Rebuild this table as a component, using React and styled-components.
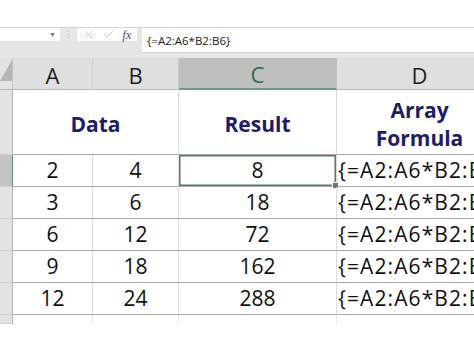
import React from "react";
import styled, { createGlobalStyle, css } from "styled-components";
import { X, Check } from "lucide-react";

const Global = createGlobalStyle`
  html, body { margin: 0; padding: 0; background: #ffffff; }
  body { font-family: "Open Sans", "Noto Sans", sans-serif; }
`;

const Page = styled.div`
  width: 474px;
  height: 355px;
  overflow: hidden;
  background: #ffffff;
`;

const TopSpace = styled.div`
  height: 27px;
  background: #ffffff;
`;

const FormulaBar = styled.div`
  display: flex;
  align-items: flex-start;
  height: 31px;
  box-sizing: border-box;
  background: #e6e6e6;
  border-top: 1px solid #d2d2d2;
`;

const NameBox = styled.div`
  width: 60px;
  height: 13px;
  background: #ffffff;
  display: flex;
  align-items: center;
  justify-content: flex-end;
  padding-right: 4px;
  box-sizing: border-box;
  color: #777;
  font-size: 7px;
`;

const Dots = styled.div`
  width: 17px;
  height: 13px;
  display: flex;
  align-items: center;
  justify-content: center;
  color: #b0b0b0;
  font-size: 9px;
  line-height: 1;
`;

const IconBox = styled.div`
  width: 60px;
  height: 13px;
  background: #ffffff;
  display: flex;
  align-items: center;
  justify-content: space-around;
  padding: 0 2px;
  box-sizing: border-box;
  color: #ababab;
`;

const Fx = styled.span`
  font-family: "Liberation Serif", serif;
  font-style: italic;
  font-size: 13px;
  color: #555;
  line-height: 1;
`;

const FormulaInput = styled.div`
  flex: 1;
  margin-left: 5px;
  height: 25px;
  background: #ffffff;
  border-bottom: 1px solid #d4d4d4;
  box-sizing: border-box;
  padding: 6px 0 0 5px;
  font-size: 11.5px;
  line-height: 14px;
  color: #1a1a1a;
  white-space: nowrap;
`;

const Sheet = styled.div`
  display: grid;
  grid-template-columns: 13px 80px 86px 158px 166px;
  grid-template-rows: 32px 65px repeat(5, 32px) 9px;
  width: 503px;
  background: #ffffff;
  position: relative;
`;

const Corner = styled.div`
  background: #e3e3e3;
  border-right: 1px solid #c4c4c4;
  border-bottom: 1px solid #b8b8b8;
  box-sizing: border-box;
  display: flex;
  align-items: flex-start;
  justify-content: flex-end;
  padding-top: 2px;
`;

const ColHead = styled.div`
  background: ${(p) => (p.$active ? "#bfbfbf" : "#dfdfdf")};
  color: ${(p) => (p.$active ? "#217346" : "#1e1e1e")};
  border-right: 1px solid ${(p) => (p.$active ? "#bfbfbf" : "#cfcfcf")};
  border-bottom: ${(p) => (p.$active ? "2px solid #6e9c80" : "1px solid #b8b8b8")};
  box-sizing: border-box;
  display: flex;
  align-items: center;
  justify-content: center;
  font-size: 22px;
  line-height: 1;
  padding-top: 2px;
`;

const RowHead = styled.div`
  background: ${(p) => (p.$active ? "#c4c4c4" : "#e3e3e3")};
  border-right: 1px solid ${(p) => (p.$active ? "#5f8f72" : "#b4b4b4")};
  border-bottom: 1px solid #d0d0d0;
  box-sizing: border-box;
`;

const Cell = styled.div`
  border-right: 1px solid #dcdcdc;
  border-bottom: 1px solid #a9a9a9;
  box-sizing: border-box;
  display: flex;
  align-items: center;
  justify-content: ${(p) => (p.$left ? "flex-start" : "center")};
  padding-left: ${(p) => (p.$left ? "1px" : "0")};
  letter-spacing: ${(p) => (p.$left ? "1.1px" : "0")};
  font-size: 21px;
  line-height: 1;
  color: #111;
  white-space: nowrap;
  position: relative;
  ${(p) =>
    p.$selected &&
    css`
      box-shadow: inset 0 0 0 1.5px #4f8163;
      &::after {
        content: "";
        position: absolute;
        right: -3px;
        bottom: -3px;
        width: 5px;
        height: 5px;
        background: #4f8163;
        border: 1px solid #ffffff;
      }
    `}
`;

const TitleCell = styled(Cell)`
  grid-column: span ${(p) => p.$span || 1};
  font-weight: 700;
  color: #1c1c6e;
  flex-direction: column;
  line-height: 28px;
  padding-top: 3px;
  text-align: center;
`;

const TailCell = styled.div`
  border-right: 1px solid #e8e8e8;
  box-sizing: border-box;
`;

const rows = [
  [2, 4, 8],
  [3, 6, 18],
  [6, 12, 72],
  [9, 18, 162],
  [12, 24, 288],
];

const cols = ["A", "B", "C", "D"];

export default function App() {
  return (
    <Page>
      <Global />
      <TopSpace />
      <FormulaBar>
        <NameBox>▼</NameBox>
        <Dots>⁝</Dots>
        <IconBox>
          <X size={13} strokeWidth={1.3} />
          <Check size={13} strokeWidth={1.3} />
          <Fx>fx</Fx>
        </IconBox>
        <FormulaInput>{"{=A2:A6*B2:B6}"}</FormulaInput>
      </FormulaBar>
      <Sheet>
        <Corner>
          <svg width="12" height="21" viewBox="0 0 12 21">
            <polygon points="0,21 12,0 12,21" fill="#b5b5b5" />
          </svg>
        </Corner>
        {cols.map((c) => (
          <ColHead key={c} $active={c === "C"}>
            {c}
          </ColHead>
        ))}

        <RowHead />
        <TitleCell $span={2}>Data</TitleCell>
        <TitleCell>Result</TitleCell>
        <TitleCell>
          <span>Array</span>
          <span>Formula</span>
        </TitleCell>

        {rows.map((r, i) => (
          <React.Fragment key={i}>
            <RowHead $active={i === 0} />
            <Cell>{r[0]}</Cell>
            <Cell>{r[1]}</Cell>
            <Cell $selected={i === 0}>{r[2]}</Cell>
            <Cell $left>{"{=A2:A6*B2:B6}"}</Cell>
          </React.Fragment>
        ))}

        <RowHead />
        <TailCell />
        <TailCell />
        <TailCell />
        <TailCell />
      </Sheet>
    </Page>
  );
}
